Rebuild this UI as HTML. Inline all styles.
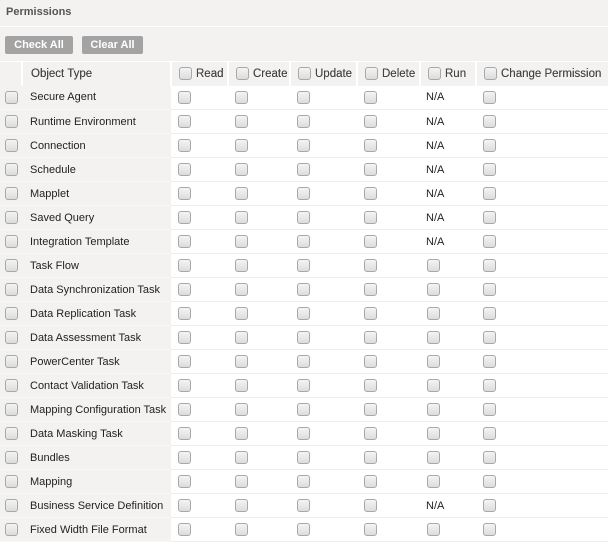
<!DOCTYPE html>
<html><head><style>
*{margin:0;padding:0;box-sizing:border-box}
body{width:608px;height:541px;overflow:hidden;background:#f3f2f0;font-family:"Liberation Sans",Arial,sans-serif;font-size:11px;color:#222}
.title{height:27px;line-height:25px;padding-left:6px;font-weight:bold;color:#555;border-bottom:1px solid #fff}
.btns{height:34px;position:relative}
.btn{position:absolute;top:9px;height:18px;line-height:18px;background:#a3a3a3;color:#fff;font-weight:bold;font-size:11px;text-align:center;border-radius:2px}
table{border-collapse:collapse;table-layout:fixed;width:608px}
td,th{height:24px;border-bottom:1px solid #ececec;white-space:nowrap;overflow:hidden;text-align:left;vertical-align:middle}
th{height:24px;background:#f3f2f0;font-weight:normal;color:#444;border-right:2px solid #fff;border-top:1px solid #fff;border-bottom:0;font-size:11.5px;text-shadow:0 0 0.3px #444}
td{background:#fff}
td.g{background:#f3f2f0;border-bottom:1px solid #f8f8f7}
td.n{padding-left:8px}
.c{display:inline-block;width:13px;height:13px;border:1px solid #a8a8a8;border-radius:3px;background:linear-gradient(#f4f4f4,#dcdcdc);vertical-align:-3px}
td .c{margin-left:7px}
td.g .c{margin-left:5px}
th .c{margin-left:7px;margin-right:4px}
.na{padding-left:6px}
</style></head><body>
<div class="title">Permissions</div>
<div class="btns"><div class="btn" style="left:5px;width:68px">Check All</div><div class="btn" style="left:82px;width:61px">Clear All</div></div>
<table>
<colgroup><col style="width:22px"><col style="width:149px"><col style="width:57px"><col style="width:62px"><col style="width:67px"><col style="width:63px"><col style="width:56px"><col style="width:132px"></colgroup>
<tr><th></th><th style="padding-left:8px">Object Type</th><th><span class="c"></span>Read</th><th><span class="c"></span>Create</th><th><span class="c"></span>Update</th><th><span class="c"></span>Delete</th><th><span class="c"></span>Run</th><th style="border-right:0"><span class="c"></span>Change Permission</th></tr>
<tr><td class="g"><span class="c"></span></td><td class="g n">Secure Agent</td><td><span class="c"></span></td><td><span class="c"></span></td><td><span class="c"></span></td><td><span class="c"></span></td><td class="na">N/A</td><td><span class="c"></span></td></tr>
<tr><td class="g"><span class="c"></span></td><td class="g n">Runtime Environment</td><td><span class="c"></span></td><td><span class="c"></span></td><td><span class="c"></span></td><td><span class="c"></span></td><td class="na">N/A</td><td><span class="c"></span></td></tr>
<tr><td class="g"><span class="c"></span></td><td class="g n">Connection</td><td><span class="c"></span></td><td><span class="c"></span></td><td><span class="c"></span></td><td><span class="c"></span></td><td class="na">N/A</td><td><span class="c"></span></td></tr>
<tr><td class="g"><span class="c"></span></td><td class="g n">Schedule</td><td><span class="c"></span></td><td><span class="c"></span></td><td><span class="c"></span></td><td><span class="c"></span></td><td class="na">N/A</td><td><span class="c"></span></td></tr>
<tr><td class="g"><span class="c"></span></td><td class="g n">Mapplet</td><td><span class="c"></span></td><td><span class="c"></span></td><td><span class="c"></span></td><td><span class="c"></span></td><td class="na">N/A</td><td><span class="c"></span></td></tr>
<tr><td class="g"><span class="c"></span></td><td class="g n">Saved Query</td><td><span class="c"></span></td><td><span class="c"></span></td><td><span class="c"></span></td><td><span class="c"></span></td><td class="na">N/A</td><td><span class="c"></span></td></tr>
<tr><td class="g"><span class="c"></span></td><td class="g n">Integration Template</td><td><span class="c"></span></td><td><span class="c"></span></td><td><span class="c"></span></td><td><span class="c"></span></td><td class="na">N/A</td><td><span class="c"></span></td></tr>
<tr><td class="g"><span class="c"></span></td><td class="g n">Task Flow</td><td><span class="c"></span></td><td><span class="c"></span></td><td><span class="c"></span></td><td><span class="c"></span></td><td><span class="c"></span></td><td><span class="c"></span></td></tr>
<tr><td class="g"><span class="c"></span></td><td class="g n">Data Synchronization Task</td><td><span class="c"></span></td><td><span class="c"></span></td><td><span class="c"></span></td><td><span class="c"></span></td><td><span class="c"></span></td><td><span class="c"></span></td></tr>
<tr><td class="g"><span class="c"></span></td><td class="g n">Data Replication Task</td><td><span class="c"></span></td><td><span class="c"></span></td><td><span class="c"></span></td><td><span class="c"></span></td><td><span class="c"></span></td><td><span class="c"></span></td></tr>
<tr><td class="g"><span class="c"></span></td><td class="g n">Data Assessment Task</td><td><span class="c"></span></td><td><span class="c"></span></td><td><span class="c"></span></td><td><span class="c"></span></td><td><span class="c"></span></td><td><span class="c"></span></td></tr>
<tr><td class="g"><span class="c"></span></td><td class="g n">PowerCenter Task</td><td><span class="c"></span></td><td><span class="c"></span></td><td><span class="c"></span></td><td><span class="c"></span></td><td><span class="c"></span></td><td><span class="c"></span></td></tr>
<tr><td class="g"><span class="c"></span></td><td class="g n">Contact Validation Task</td><td><span class="c"></span></td><td><span class="c"></span></td><td><span class="c"></span></td><td><span class="c"></span></td><td><span class="c"></span></td><td><span class="c"></span></td></tr>
<tr><td class="g"><span class="c"></span></td><td class="g n">Mapping Configuration Task</td><td><span class="c"></span></td><td><span class="c"></span></td><td><span class="c"></span></td><td><span class="c"></span></td><td><span class="c"></span></td><td><span class="c"></span></td></tr>
<tr><td class="g"><span class="c"></span></td><td class="g n">Data Masking Task</td><td><span class="c"></span></td><td><span class="c"></span></td><td><span class="c"></span></td><td><span class="c"></span></td><td><span class="c"></span></td><td><span class="c"></span></td></tr>
<tr><td class="g"><span class="c"></span></td><td class="g n">Bundles</td><td><span class="c"></span></td><td><span class="c"></span></td><td><span class="c"></span></td><td><span class="c"></span></td><td><span class="c"></span></td><td><span class="c"></span></td></tr>
<tr><td class="g"><span class="c"></span></td><td class="g n">Mapping</td><td><span class="c"></span></td><td><span class="c"></span></td><td><span class="c"></span></td><td><span class="c"></span></td><td><span class="c"></span></td><td><span class="c"></span></td></tr>
<tr><td class="g"><span class="c"></span></td><td class="g n">Business Service Definition</td><td><span class="c"></span></td><td><span class="c"></span></td><td><span class="c"></span></td><td><span class="c"></span></td><td class="na">N/A</td><td><span class="c"></span></td></tr>
<tr><td class="g"><span class="c"></span></td><td class="g n">Fixed Width File Format</td><td><span class="c"></span></td><td><span class="c"></span></td><td><span class="c"></span></td><td><span class="c"></span></td><td><span class="c"></span></td><td><span class="c"></span></td></tr>
</table>
</body></html>
